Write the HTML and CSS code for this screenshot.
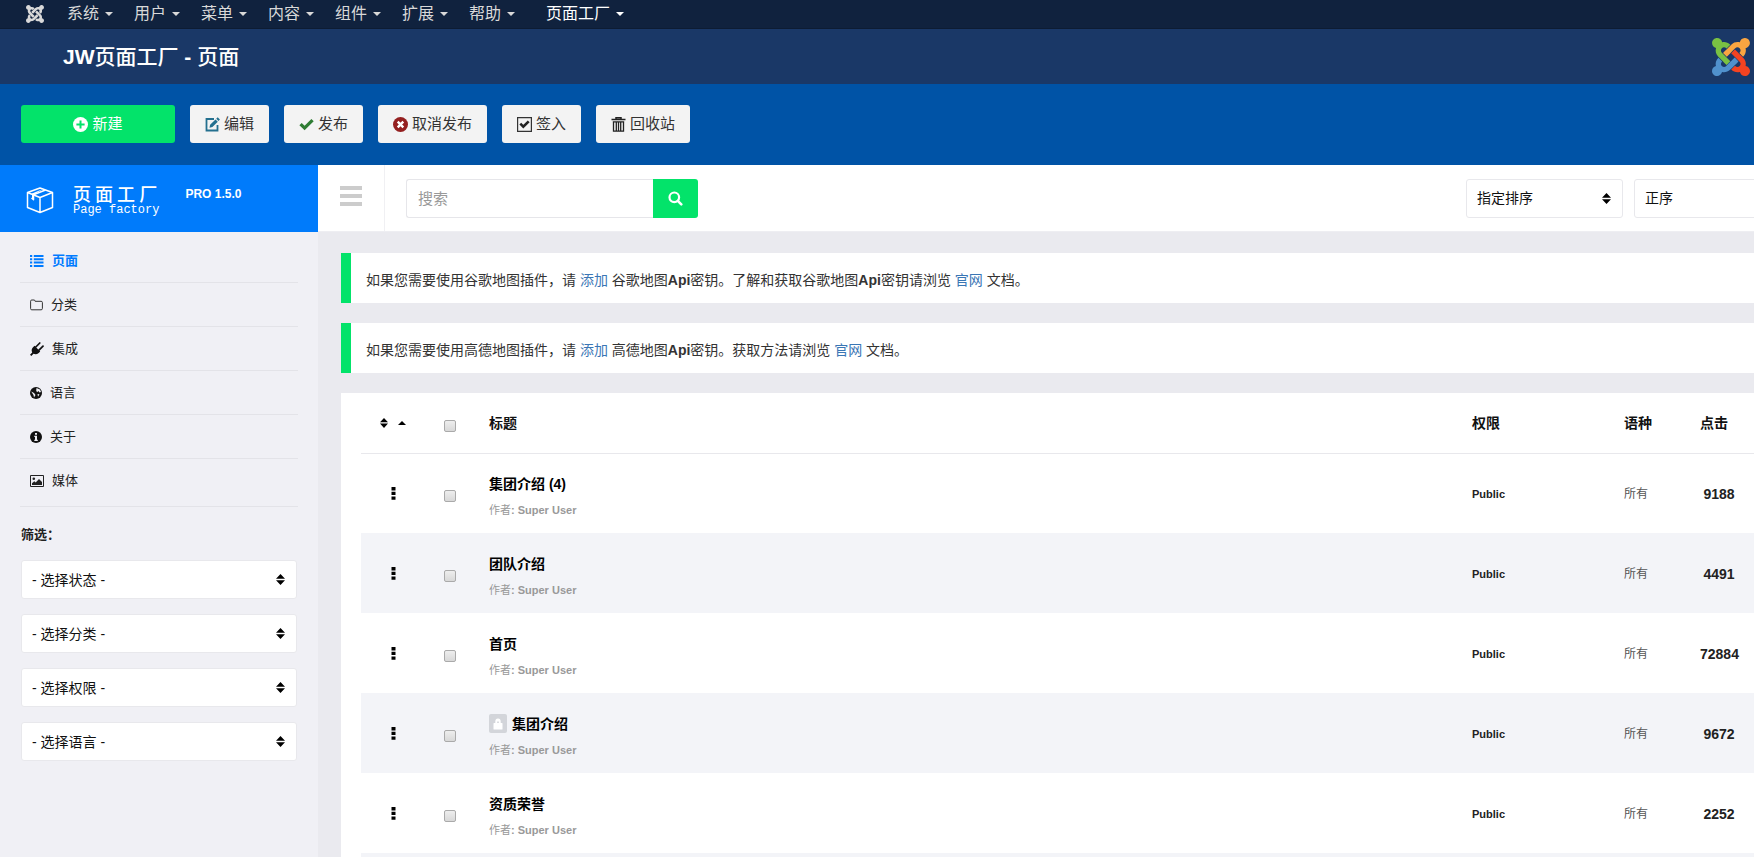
FILE: index.html
```html
<!DOCTYPE html>
<html lang="zh-CN">
<head>
<meta charset="utf-8">
<title>JW页面工厂 - 页面</title>
<link rel="stylesheet" href="styles.css">
</head>
<body>
<svg class="defs" aria-hidden="true">
  <symbol id="joomla" viewBox="0 32 448 448">
    <path class="j-green" d="M.6 92.1C.6 58.8 27.4 32 60.4 32c30 0 54.5 21.9 59.2 50.2 32.6-7.6 67.1.6 96.5 30l-44.3 44.3c-20.5-20.5-42.6-16.3-55.4-3.5-14.3 14.3-14.3 37.9 0 52.2l99.5 99.5-44 44.3c-87.7-87.2-49.7-49.7-99.8-99.7-26.8-26.5-35-64.8-24.8-98.9C20.4 144.6.6 120.7.6 92.1z"/>
    <path class="j-orange" d="M130.1 208.5l44.3 44.3c10-10 89.7-89.7 99.7-99.8 14.3-14.3 37.6-14.3 51.9 0 12.8 12.8 17 35-3.5 55.4l44 44.3c31.2-31.2 38.5-67.6 28.9-101.2 29.2-4.1 51.9-29.2 51.9-59.5 0-33.2-26.8-60.1-59.8-60.1-30.3 0-55.4 22.5-59.5 51.6-33.8-9.9-71.7-1.5-98.3 25.1-18.3 19.1-71.1 71.5-99.6 99.9z"/>
    <path class="j-red" d="M396.4 360.7c8.2-32.7-.9-68.5-26.3-93.9-11.8-12.2 5 4.7-99.5-99.7l-44.3 44.3 99.7 99.7c14.3 14.3 14.3 37.6 0 51.9-12.8 12.8-35 17-55.4-3.5l-44 44.3c27.6 30.2 68 38.8 102.7 28 5.5 27.4 29.7 48.1 58.9 48.1 33 0 59.8-26.8 59.8-60.1 0-30.2-22.5-55-51.6-59.1z"/>
    <path class="j-blue" d="M312.1 307.6l-44-44.3c-87 86.4-50.4 50.4-99.7 99.8-14.3 14.3-37.6 14.3-51.9 0-13.1-13.4-16.9-35.3 3.2-55.4l-44-44.3c-30.2 30.2-38 65.2-29.5 98.3-26.7 6-46.2 29.9-46.2 58.2C0 453.2 26.8 480 59.8 480c28.6 0 52.5-19.8 58.6-46.7 32.7 8.2 68.5-.6 94.2-26 32.1-32 12.2-12.4 99.5-99.7z"/>
  </symbol>
  <symbol id="dots" viewBox="0 0 5 13"><path d="M.5 0h4v3.4h-4zM.5 4.7h4v3.4h-4zM.5 9.4h4v3.4h-4z"/></symbol>
</svg>

<nav class="topnav">
  <a class="mark" href="#" aria-label="Joomla"><svg width="18" height="18"><use href="#joomla"/></svg></a>
  <a class="nav-item" href="#">系统<i class="caret"></i></a>
  <a class="nav-item" href="#">用户<i class="caret"></i></a>
  <a class="nav-item" href="#">菜单<i class="caret"></i></a>
  <a class="nav-item" href="#">内容<i class="caret"></i></a>
  <a class="nav-item" href="#">组件<i class="caret"></i></a>
  <a class="nav-item" href="#">扩展<i class="caret"></i></a>
  <a class="nav-item" href="#">帮助<i class="caret"></i></a>
  <a class="nav-item current" href="#">页面工厂<i class="caret"></i></a>
</nav>

<header class="header">
  <h1><b>JW</b>页面工厂 <b>-</b> 页面</h1>
  <svg class="logo" width="38" height="38"><use href="#joomla"/></svg>
</header>

<div class="toolbar">
  <button class="btn btn-new" type="button"><svg width="15" height="15" viewBox="0 0 15 15"><circle cx="7.5" cy="7.5" r="7.5" fill="#fff"/><path d="M7.5 3.4v8.2M3.4 7.5h8.2" stroke="#03e36a" stroke-width="2"/></svg>新建</button>
  <button class="btn" type="button"><svg width="15" height="15" viewBox="0 0 15 15"><path d="M9 2H1.500v11.500H12.500V8" fill="none" stroke="#24708f" stroke-width="1.800"/><path d="M4.500 10.800l.6-3 5.400-5.400 2.300 2.300-5.400 5.400zM11.200 1.700L12.700.3 14.900 2.500 13.500 4z" fill="#24708f"/></svg>编辑</button>
  <button class="btn" type="button"><svg width="15" height="15" viewBox="0 0 15 15"><path d="M.4 8.200L2.700 5.900 5.600 8.700 12.400 2 14.700 4.300 5.600 13.200z" fill="#2f7d33"/></svg>发布</button>
  <button class="btn" type="button"><svg width="15" height="15" viewBox="0 0 15 15"><circle cx="7.500" cy="7.500" r="7.500" fill="#942020"/><path d="M4.700 4.700l5.600 5.600M10.300 4.700l-5.600 5.600" stroke="#fff" stroke-width="2.400"/></svg>取消发布</button>
  <button class="btn" type="button"><svg width="15" height="15" viewBox="0 0 15 15"><path d="M.6.6h13.800v13.800H.6z" fill="none" stroke="#333" stroke-width="1.200"/><path d="M3.300 6.700l3 3 5.400-5.400" fill="none" stroke="#222" stroke-width="2.600"/></svg>签入</button>
  <button class="btn" type="button"><svg width="15" height="15" viewBox="0 0 15 15"><path d="M.5 2.500h14M5 2V.8h5V2" fill="none" stroke="#222" stroke-width="1.500"/><path d="M2.500 4.500v9.700h10V4.500M1.800 4.800h11.400M5.300 4.500v9M7.500 4.500v9M9.700 4.500v9" fill="none" stroke="#222" stroke-width="1.300"/></svg>回收站</button>
</div>

<div class="layout">
  <aside class="sidebar">
    <div class="brand">
      <svg width="28" height="28" viewBox="0 0 28 28" fill="none" stroke="#fff" stroke-width="1.500" stroke-linejoin="round"><path d="M14 2L26.500 6.500V21.500L14 26.500 1.500 21.500V6.500zM1.500 6.500L14 11.500 26.500 6.500M14 11.500v15"/><path d="M19.500 4L7.500 8.700v5l-2-1.700"/><path d="M17 3L6 7.600v4.500l1.500 1V9z" fill="#fff" stroke="none"/></svg>
      <div class="brand-name"><strong>页 面 工 厂</strong><span>Page factory</span></div>
      <span class="version">PRO 1.5.0</span>
    </div>
    <ul class="menu">
      <li><a class="active" href="#"><svg width="14" height="12" viewBox="0 0 14 12" fill="#007bff"><path d="M0 0h2.200v2H0zM0 3.300h2.200v2H0zM0 6.600h2.200v2H0zM0 9.900h2.200v2H0zM3.800 0H13.500v2H3.800zM3.800 3.300H13.500v2H3.800zM3.800 6.600H13.500v2H3.800zM3.800 9.900H13.500v2H3.800z"/></svg>页面</a></li>
      <li><a href="#"><svg width="13" height="12" viewBox="0 0 13 12"><path d="M.6 2.200Q.6 1 1.800 1H4q1.100 0 1.100 1.300h6q1.300 0 1.300 1.200v6q0 1.300-1.300 1.300H1.800Q.6 10.800.6 9.600z" fill="none" stroke="#333"/></svg>分类</a></li>
      <li><a href="#"><svg width="14" height="14" viewBox="0 0 14 14"><path d="M0 12.700L2.200 10.500Q.8 7.500 3 5.200L4.500 3.700 10.200 9.400 8.700 10.900Q6.200 13 3.500 11.700L1.300 14z" fill="#111"/><path d="M5.800 5L9.800 1M9 8.200l4-4" stroke="#111" stroke-width="1.700" stroke-linecap="round"/></svg>集成</a></li>
      <li><a href="#"><svg width="12" height="12" viewBox="0 0 12 12"><circle cx="6" cy="6" r="6" fill="#111"/><path d="M6.500 1L10 2.500 11 5 9.500 5.500 8.500 4 7 5.200 6.200 3.500zM1.200 4.500L4 6 5.500 8 4 10.500 3.500 8zM7.500 7l2 .2-1.500 2.500z" fill="#f0f0f5"/></svg>语言</a></li>
      <li><a href="#"><svg width="12" height="12" viewBox="0 0 12 12"><circle cx="6" cy="6" r="6" fill="#111"/><path d="M5 2h2v1.800H5zM4.300 4.700H7v4h.8V10H4.300V8.700H5V6h-.7z" fill="#f0f0f5"/></svg>关于</a></li>
      <li><a href="#"><svg width="14" height="12" viewBox="0 0 14 12"><path d="M.5.5h13v11H.5z" fill="none" stroke="#222"/><circle cx="3.800" cy="3.700" r="1.300" fill="#222"/><path d="M2 10V8.200L4.300 6.200 5.700 7.500 9 4 12 7v3z" fill="#222"/></svg>媒体</a></li>
    </ul>
    <form class="filters">
      <h2>筛选：</h2>
      <select class="select" aria-label="状态"><option>- 选择状态 -</option></select>
      <select class="select" aria-label="分类"><option>- 选择分类 -</option></select>
      <select class="select" aria-label="权限"><option>- 选择权限 -</option></select>
      <select class="select" aria-label="语言"><option>- 选择语言 -</option></select>
    </form>
  </aside>

  <main class="main">
    <div class="mainbar">
      <button class="burger" type="button" aria-label="切换菜单"><i></i><i></i><i></i></button>
      <form class="search">
        <input type="text" placeholder="搜索" aria-label="搜索">
        <button type="button" aria-label="搜索"><svg width="15" height="15" viewBox="0 0 15 15" fill="none" stroke="#fff"><circle cx="6.300" cy="6.300" r="4.800" stroke-width="2.200"/><path d="M9.800 9.800l3.500 3.500" stroke-width="2.600" stroke-linecap="round"/></svg></button>
      </form>
      <select class="select" aria-label="排序"><option>指定排序</option></select>
      <select class="select" aria-label="顺序"><option>正序</option></select>
    </div>

    <div class="content">
      <p class="notice">如果您需要使用谷歌地图插件，请 <a href="#">添加</a> 谷歌地图<b>Api</b>密钥。了解和获取谷歌地图<b>Api</b>密钥请浏览 <a href="#">官网</a> 文档。</p>
      <p class="notice">如果您需要使用高德地图插件，请 <a href="#">添加</a> 高德地图<b>Api</b>密钥。获取方法请浏览 <a href="#">官网</a> 文档。</p>

      <div class="card">
        <table class="pages">
          <thead>
            <tr>
              <th class="order"><a href="#" aria-label="排序"><svg width="8" height="10" viewBox="0 0 8 10"><path d="M4 0l4 4.300H0zM0 5.500h8L4 10z"/></svg><svg width="8" height="4" viewBox="0 0 8 4"><path d="M4 0l4 4H0z"/></svg></a></th>
              <th class="check"><input type="checkbox" aria-label="全选"></th>
              <th>标题</th>
              <th class="access">权限</th>
              <th class="lang">语种</th>
              <th class="hits">点击</th>
            </tr>
          </thead>
          <tbody>
            <tr><td class="order"><svg width="5" height="13"><use href="#dots"/></svg></td><td class="check"><input type="checkbox" aria-label="集团介绍 (4)"></td><td class="name"><a class="title" href="#">集团介绍 (4)</a><small>作者<b>: Super User</b></small></td><td class="access">Public</td><td class="lang">所有</td><td class="hits">9188</td></tr>
            <tr><td class="order"><svg width="5" height="13"><use href="#dots"/></svg></td><td class="check"><input type="checkbox" aria-label="团队介绍"></td><td class="name"><a class="title" href="#">团队介绍</a><small>作者<b>: Super User</b></small></td><td class="access">Public</td><td class="lang">所有</td><td class="hits">4491</td></tr>
            <tr><td class="order"><svg width="5" height="13"><use href="#dots"/></svg></td><td class="check"><input type="checkbox" aria-label="首页"></td><td class="name"><a class="title" href="#">首页</a><small>作者<b>: Super User</b></small></td><td class="access">Public</td><td class="lang">所有</td><td class="hits">72884</td></tr>
            <tr><td class="order"><svg width="5" height="13"><use href="#dots"/></svg></td><td class="check"><input type="checkbox" aria-label="集团介绍"></td><td class="name"><a class="title" href="#"><span class="lock"><svg width="10" height="12" viewBox="0 0 10 12"><path d="M1 5h1.300V3.500Q2.300.5 5 .5t2.700 3V5H9q.5 0 .5.500V11q0 .5-.5.500H1Q.5 11.500.5 11V5.500Q.5 5 1 5z" fill="#fff"/><path d="M4.200 3.400h1.600V5H4.200z" fill="#d3d5da"/></svg></span>集团介绍</a><small>作者<b>: Super User</b></small></td><td class="access">Public</td><td class="lang">所有</td><td class="hits">9672</td></tr>
            <tr><td class="order"><svg width="5" height="13"><use href="#dots"/></svg></td><td class="check"><input type="checkbox" aria-label="资质荣誉"></td><td class="name"><a class="title" href="#">资质荣誉</a><small>作者<b>: Super User</b></small></td><td class="access">Public</td><td class="lang">所有</td><td class="hits">2252</td></tr>
            <tr><td colspan="6"></td></tr>
          </tbody>
        </table>
      </div>
    </div>
  </main>
</div>
</body>
</html>
```

FILE: styles.css
```css
* { box-sizing: border-box; }

body {
  margin: 0;
  height: 100vh;
  overflow: hidden;
  display: flex;
  flex-direction: column;
  background: #eaeaef;
  color: #222;
  font: 14px/20px "Liberation Sans", "Noto Sans CJK SC", sans-serif;
}

a { color: inherit; text-decoration: none; }
svg { display: block; flex: none; }
button, input, select { font: inherit; margin: 0; }
.defs { position: absolute; width: 0; height: 0; }

.j-green { fill: var(--mark, #7ac143); }
.j-orange { fill: var(--mark, #f9a541); }
.j-red { fill: var(--mark, #f44321); }
.j-blue { fill: var(--mark, #5091cd); }

/* Top navigation */
.topnav {
  flex: none;
  display: flex;
  align-items: center;
  height: 29px;
  padding: 0 26px;
  background: #10223e;
  border-bottom: 1px solid #0d1c33;
  font-size: 16px;
  color: #d9d9d9;
}
.mark { --mark: #d9d9d9; margin-right: 23px; }
.nav-item { display: flex; align-items: center; gap: 6px; margin-right: 21px; }
.nav-item.current { margin-left: 10px; color: #fff; }
.caret {
  border: 4px solid transparent;
  border-top-color: currentColor;
  border-bottom: 0;
}

.header {
  flex: none;
  display: flex;
  align-items: center;
  justify-content: space-between;
  height: 55px;
  padding: 1px 4px 0 63px;
  background: #1a3867;
  color: #fff;
}
.header h1 { margin: 0; font-size: 21px; line-height: 28px; font-weight: 500; }

.toolbar {
  flex: none;
  display: flex;
  gap: 15px;
  height: 81px;
  padding: 21px 21px 0;
  background: #0053a6;
}
.btn {
  display: flex;
  align-items: center;
  justify-content: center;
  gap: 4px;
  height: 38px;
  padding: 0 15px;
  border: 0;
  border-radius: 3px;
  background: #f3f3f3;
  color: #333;
  font-size: 15px;
}
.btn-new { width: 154px; background: #03e36a; color: #fff; }

.layout { flex: 1; display: flex; min-height: 0; overflow: hidden; }

/* Sidebar */
.sidebar { flex: none; width: 318px; background: #f0f0f5; }
.brand {
  display: flex;
  align-items: flex-start;
  height: 67px;
  padding: 18px 26px 0;
  background: #007bfb;
  color: #fff;
}
.brand svg { margin-top: 3px; }
.brand-name { display: flex; flex-direction: column; margin: 0 26px 0 19px; }
.brand-name strong { font: 500 18px/20px "Noto Sans CJK SC", sans-serif; }
.brand-name span { font: 12px/14px "Liberation Mono", monospace; }
.version { font-size: 12px; line-height: 22px; font-weight: bold; }

.menu { list-style: none; margin: 0; padding: 7px 20px 0; font-size: 13px; }
.menu li { border-bottom: 1px solid #e3e3e8; }
.menu li:last-child { padding-bottom: 4px; }
.menu a { display: flex; align-items: center; gap: 8px; height: 43px; padding-left: 10px; color: #222; }
.menu a.active { color: #007bff; font-weight: bold; }

.filters { padding: 17px 21px 0; }
.filters h2 { margin: 0 0 14px; font-size: 13px; line-height: 22px; }
.filters .select { display: block; width: 100%; margin-bottom: 15px; }

.select {
  appearance: none;
  height: 39px;
  padding: 0 10px;
  border: 1px solid #e8e8ec;
  border-radius: 3px;
  background: #fff url("data:image/svg+xml,%3Csvg xmlns='http://www.w3.org/2000/svg' width='9' height='11' viewBox='0 0 9 11'%3E%3Cpath d='M4.500 0l4.500 4.800H0zM0 6.200h9L4.500 11z'/%3E%3C/svg%3E") no-repeat right 11px center;
  color: #111;
}

/* Main column */
.main { flex: 1; min-width: 0; }
.mainbar {
  display: flex;
  align-items: center;
  gap: 11px;
  height: 67px;
  /* the second sort box runs past the window edge */
  margin-right: -37px;
  border-bottom: 1px solid #eeeef2;
  background: #fff;
}
.mainbar .select { width: 157px; }
.burger {
  align-self: stretch;
  display: flex;
  flex-direction: column;
  gap: 4px;
  width: 67px;
  padding: 21px 22px;
  border: 0;
  border-right: 1px solid #f0f0f3;
  background: none;
}
.burger i { height: 4px; background: #ccc; }
.search { display: flex; width: 292px; margin: 0 auto 0 10px; }
.search input {
  flex: 1;
  min-width: 0;
  height: 39px;
  padding: 0 11px;
  border: 1px solid #e6e6ea;
  border-right: 0;
  border-radius: 3px 0 0 3px;
  font-size: 15px;
}
.search input::placeholder { color: #999; }
.search button {
  display: flex;
  align-items: center;
  justify-content: center;
  width: 45px;
  padding: 0;
  border: 0;
  border-radius: 0 3px 3px 0;
  background: #03e36a;
}

.content { padding: 21px 0 0 23px; }
.notice {
  margin: 0 0 20px;
  padding: 17px 15px 13px;
  border-left: 10px solid #03e36a;
  background: #fff;
  color: #333;
}
.notice a { color: #3a76b5; }

.card { padding-left: 20px; background: #fff; }
.pages { width: 100%; table-layout: fixed; border-collapse: collapse; }
.pages th, .pages td { padding: 0; text-align: left; vertical-align: middle; }
.pages th { height: 60px; border-bottom: 1px solid #e8e8ec; color: #111; }
.pages td { height: 80px; }
.pages tbody tr:nth-child(even) { background: #f3f4f8; }
.pages .order { width: 66px; }
.pages .order a { display: flex; align-items: center; gap: 10px; padding-left: 19px; }
.pages td.order svg { margin-left: 30px; }
.pages .check { width: 62px; padding: 6px 0 0 17px; }
.pages .access { width: 152px; }
.pages .lang { width: 76px; }
.pages .hits { width: 54px; }
.pages td.name { padding-top: 7px; }
.pages td.access { padding-top: 2px; font-size: 11px; font-weight: bold; }
.pages td.lang { padding-top: 2px; font-size: 12px; color: #555; }
.pages td.hits { padding: 2px 16px 0 0; text-align: center; font-weight: bold; }

.title { display: flex; align-items: center; gap: 5px; margin-bottom: 6px; color: #000; font-weight: bold; }
.pages small { display: block; font-size: 11px; color: #999; }
.lock {
  display: flex;
  align-items: center;
  justify-content: center;
  width: 18px;
  height: 19px;
  border-radius: 2px;
  background: #d3d5da;
}
.pages input {
  display: block;
  appearance: none;
  width: 12px;
  height: 12px;
  border: 1px solid #aaa;
  border-radius: 2px;
  background: linear-gradient(#eee, #d8d8d8);
}
```
